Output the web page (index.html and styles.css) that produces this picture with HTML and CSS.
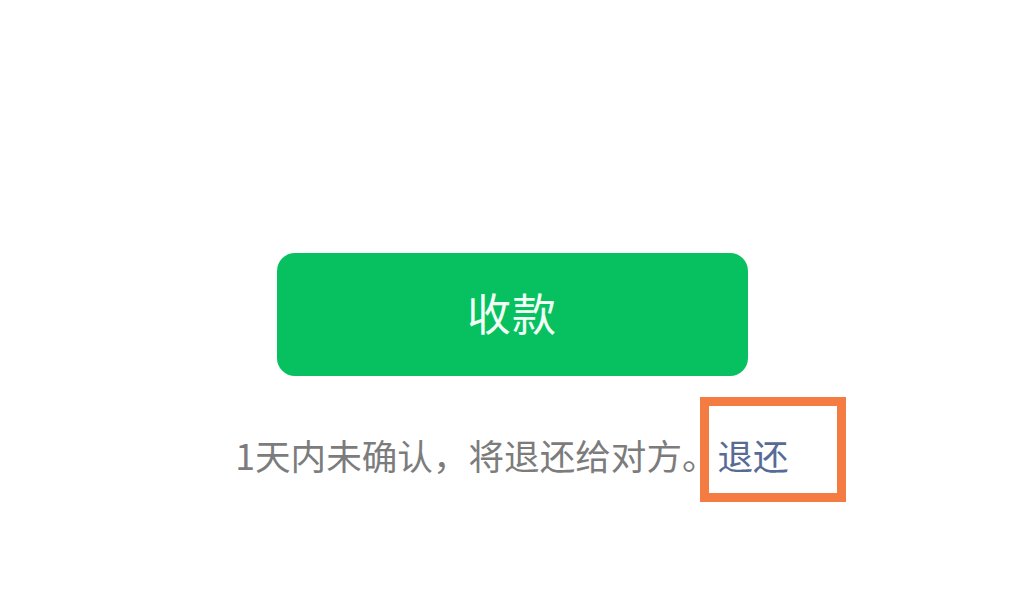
FILE: index.html
```html
<!DOCTYPE html>
<html lang="zh">
<head>
<meta charset="utf-8">
<link rel="stylesheet" href="styles.css">
</head>
<body>
<main class="page">
  <button class="btn">收款</button>
  <p class="note">1天内未确认，将退还给对方。<span class="link">退还</span></p>
</main>
</body>
</html>
```
FILE: styles.css
```css
html, body {
  margin: 0;
  padding: 0;
  background: #ffffff;
}
.page {
  width: 1024px;
  height: 606px;
  display: flex;
  flex-direction: column;
  align-items: center;
  font-family: "Noto Sans CJK SC", "Noto Sans", sans-serif;
}
.btn {
  margin-top: 253px;
  width: 471px;
  height: 123px;
  border: none;
  border-radius: 18px;
  background: #07c160;
  color: #f2fff6;
  font-family: "Noto Sans CJK SC", sans-serif;
  font-size: 44px;
  padding: 0;
  padding-bottom: 6px;
  letter-spacing: 1px;
}
.note {
  margin: 34px 0 0 0;
  font-size: 35.6px;
  line-height: 90px;
  color: #7c7c7c;
}
.link {
  position: relative;
  color: #576b95;
}
.link::after {
  content: "";
  position: absolute;
  left: -18px;
  top: -32px;
  width: 128px;
  height: 87px;
  border: 9px solid #f47c43;
}
```
